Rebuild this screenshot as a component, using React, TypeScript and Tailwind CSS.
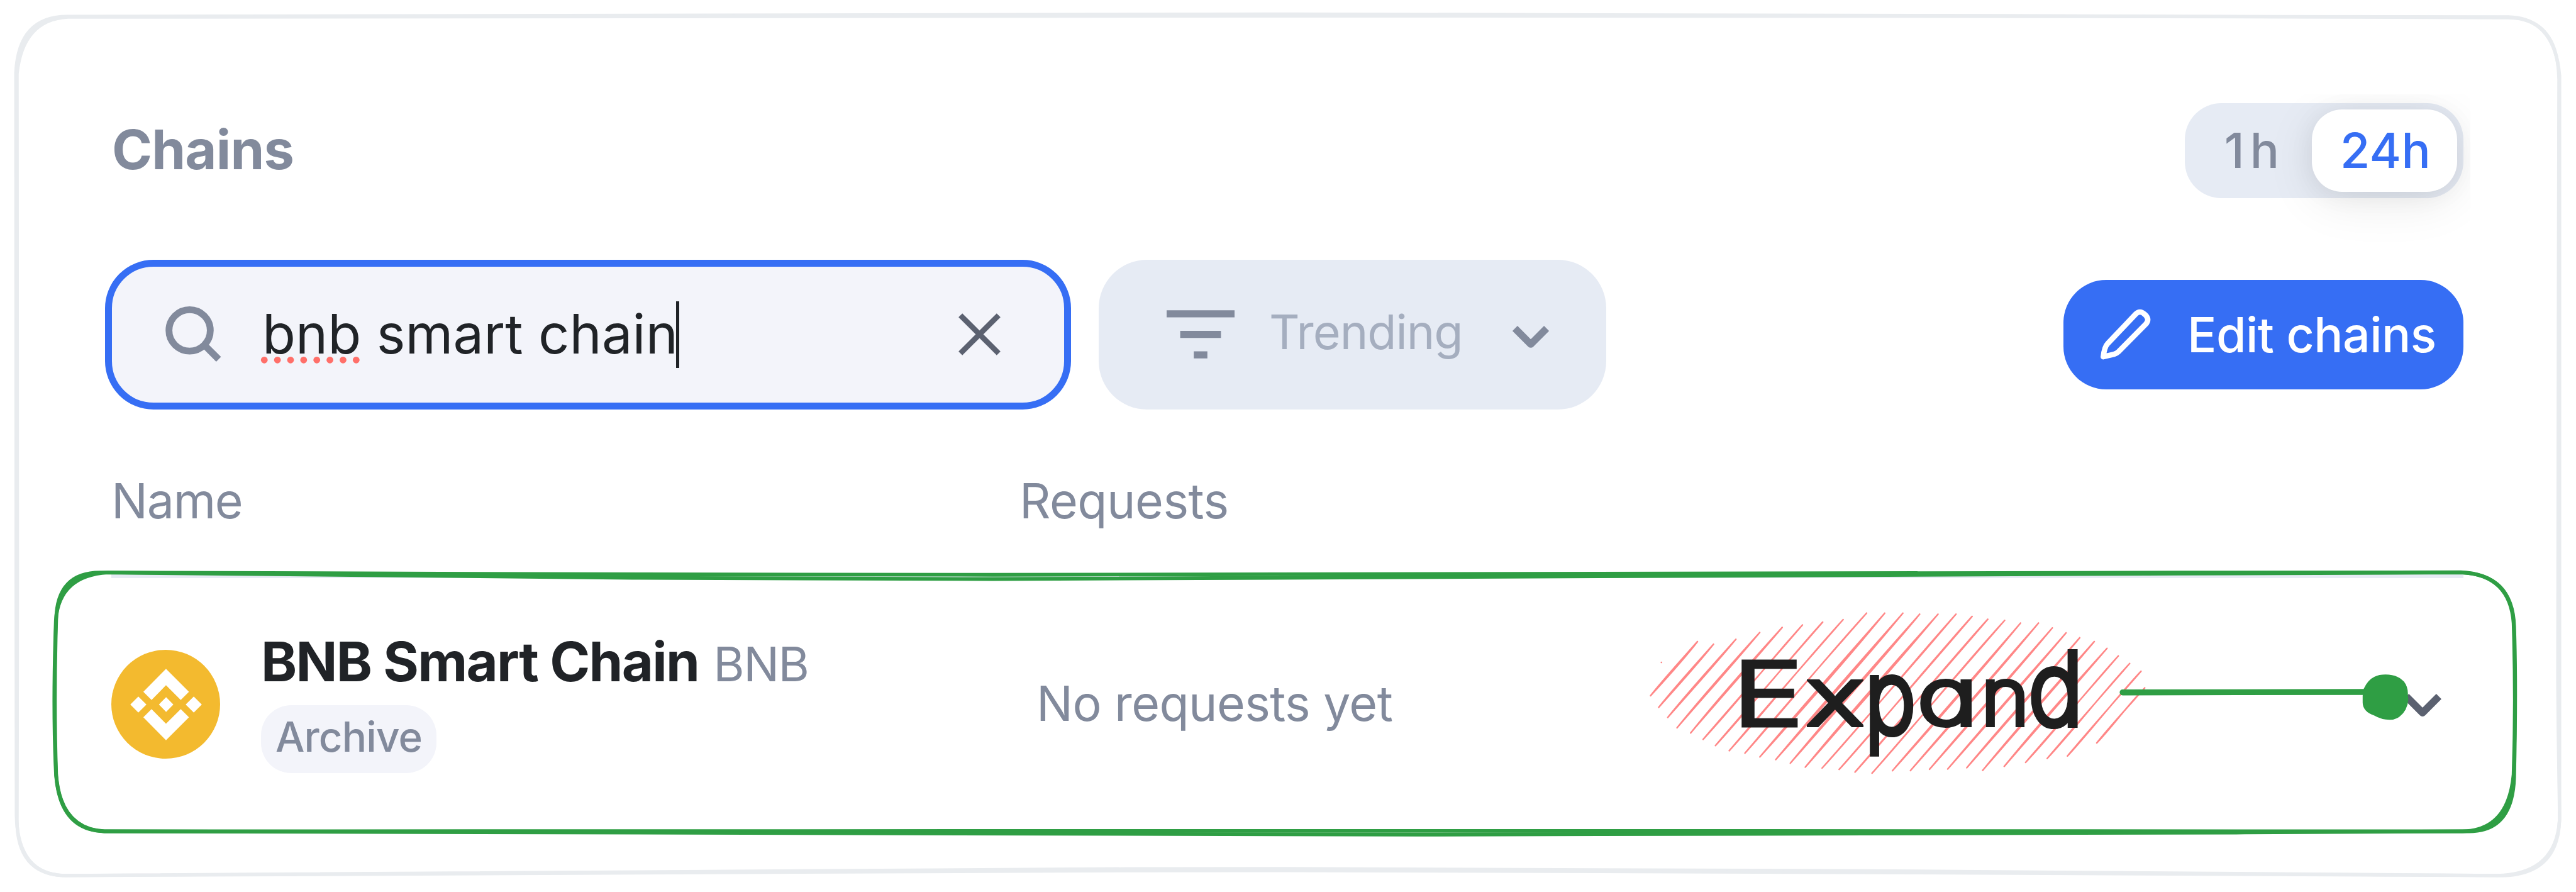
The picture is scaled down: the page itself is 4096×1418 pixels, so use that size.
import type { ReactNode } from "react";

const GREEN = "#2f9e44";

// Hatching strokes: x1, y1 (lower end), x2, y2 (upper end), in thirds of a canvas unit
const HATCH: [number, number, number, number][] = [
  [147, 558, 395, 272], [190, 620, 480, 286], [238, 673, 598, 260], [287, 728, 724, 224],
  [359, 755, 843, 197], [425, 789, 950, 184], [490, 822, 1057, 169], [563, 849, 1165, 156],
  [646, 862, 1289, 122], [725, 882, 1385, 122], [809, 896, 1481, 122], [886, 915, 1570, 127],
  [965, 936, 1667, 127], [1054, 941, 1762, 127], [1144, 948, 1847, 139], [1228, 962, 1930, 154],
  [1318, 968, 2019, 160], [1426, 955, 2103, 174], [1521, 954, 2198, 174], [1622, 947, 2271, 200],
  [1718, 946, 2344, 226], [1819, 939, 2416, 252], [1903, 953, 2493, 272], [2017, 932, 2560, 308],
  [2130, 911, 2620, 348], [2244, 890, 2680, 388], [2351, 877, 2740, 429], [2506, 808, 2760, 517],
];

function hatchPath([x1, y1, x2, y2]: [number, number, number, number], i: number) {
  const wobble = (n: number) => (((i * 37 + n * 23) % 19) - 9) * 0.8;
  const at = (t: number, n: number) =>
    `${x1 + (x2 - x1) * t + wobble(n)} ${y1 + (y2 - y1) * t + wobble(n) * 0.8}`;
  return `M${x1} ${y1}C${at(0.3, 1)} ${at(0.7, 2)} ${x2} ${y2}M${x1} ${y1}C${at(0.3, 3)} ${at(0.7, 4)} ${x2} ${y2}`;
}

function SketchOverlay() {
  return (
    <svg viewBox="0 0 4540 1572" preserveAspectRatio="none" fill="none" className="pointer-events-none absolute inset-0 z-10 h-full w-full">
      <g stroke="#e9ecef" strokeWidth="6" strokeLinecap="round">
        <path d="M120 29C1000 23 1700 24 2270 25C3000 26 3700 28 4421 31Q4508 32 4510 140C4510 500 4506 900 4508 1200C4509 1350 4511 1400 4511 1445Q4505 1542 4400 1543C3800 1538 2900 1531 2270 1531C1500 1531 700 1537 115 1543Q31 1542 29 1437C27 1000 31 500 28 128Q33 28 120 29Z" />
        <path d="M120 30C1000 26 1700 28 2270 28C3000 28 3700 29 4421 30Q4502 32 4511 133C4511 500 4511 900 4511 1445Q4508 1538 4416 1543C3800 1541 2900 1534 2270 1534C1500 1534 700 1540 110 1543Q28 1538 30 1440C32 1000 29 500 30 130Q40 34 120 30Z" />
      </g>
      <g stroke={GREEN} strokeWidth="6.5">
        <path d="M180 1009C800 1011 1200 1013 1750 1013C2700 1013 3500 1009 4337 1008.5Q4424 1012 4430 1098C4433 1190 4433 1280 4430 1365Q4421 1464 4340 1465C3000 1464 1500 1464 184 1465Q106 1461 99 1365C96 1280 96 1190 99 1093Q100 1007 180 1009Z" />
        <path d="M190 1009C800 1016 1200 1020.5 1750 1020.5C2700 1020.5 3500 1011 4337 1009Q4428 1012 4431 1104C4434 1190 4433 1280 4431 1370Q4428 1466 4350 1465C3700 1469 3000 1471 2500 1471C1700 1470 900 1468 184 1465Q100 1463 98 1350C95 1280 95 1190 98.500 1093Q104 1014 190 1009Z" />
      </g>
      <g stroke="#ff8787" strokeWidth="8" strokeLinecap="round" transform="translate(2860 1040) scale(0.33333)">
        <path d="M204 382h1" />
        {HATCH.map((h, i) => (
          <path key={i} d={hatchPath(h, i)} />
        ))}
      </g>
      <path d="M3741 1220.200C3900 1219 4050 1218.500 4180 1219.500" stroke={GREEN} strokeWidth="10.500" strokeLinecap="round" />
      <path
        fill={GREEN}
        d="M4166 1213.700Q4173 1198 4185 1192.500Q4193 1188.800 4204 1188.800Q4225 1188.600 4236.700 1200.800Q4244.500 1211 4243.700 1225L4244.500 1233Q4243 1252 4229 1263Q4222 1268.400 4212 1268.400Q4197 1268.400 4184.500 1261Q4164 1254 4164 1238V1226Z"
      />
    </svg>
  );
}

function SearchIcon() {
  return (
    <svg viewBox="0 0 100 100" fill="none" stroke="#828a9c" strokeWidth="12" className="h-[90px] w-[90px] shrink-0">
      <circle cx="42.800" cy="42.500" r="36.500" />
      <path d="M68 67.500 94 93.500" />
    </svg>
  );
}

function CloseIcon() {
  return (
    <svg viewBox="0 0 74 74" fill="none" stroke="#5b6170" strokeWidth="9.500" className="ml-auto h-[67px] w-[67px] shrink-0">
      <path d="M3.500 3.500 70.500 70.500M70.500 3.500 3.500 70.500" />
    </svg>
  );
}

function FilterIcon() {
  return (
    <svg viewBox="0 0 120 85" fill="#828a9c" className="h-[77px] w-[108px] shrink-0">
      <path d="M0 0h120v12.500H0zM24 36.300h72v12.500H24zM48 72.500h24V85H48z" />
    </svg>
  );
}

function Chevron({ className }: { className: string }) {
  return (
    <svg viewBox="0 0 67 40" fill="none" stroke="currentColor" strokeWidth="13" strokeLinejoin="round" className={className}>
      <path d="M4.500 4.500 33.500 33.500 62.500 4.500" />
    </svg>
  );
}

function PencilIcon() {
  return (
    <svg viewBox="0 0 91 91" fill="none" stroke="white" strokeWidth="9.500" strokeLinejoin="round" className="h-[82px] w-[82px] shrink-0">
      <path d="M7 84.500C8 76 10 66 15 61L64 9.500Q71.500 1.500 80 9.500Q90 18 82 27L34 75.500Q31 78.500 26 80Z" />
    </svg>
  );
}

function BnbLogo() {
  return (
    <svg viewBox="0 0 192 192" className="h-[173px] w-[173px] shrink-0">
      <circle cx="96" cy="96" r="96" fill="#f3ba2f" />
      <path
        fill="white"
        d="M96.500 33.500 137 74 122.500 88.500 96.500 62.500 71 88.500 56.500 74ZM96.500 159.500 137 119 122.500 104.500 96.500 130.500 71 104.500 56.500 119ZM33.500 96.500 47.700 82.300 62 96.500 47.700 110.700ZM131.200 96.500 145.500 82.300 159.700 96.500 145.500 110.700ZM84 96.500 96.700 83.500 109.500 96.500 96.700 109.700Z"
      />
    </svg>
  );
}

function Glyph({ className, children }: { className: string; children: ReactNode }) {
  return (
    <span className="flex justify-center">
      <span className={className}>{children}</span>
    </span>
  );
}

function ExpandNote() {
  return (
    <div
      className="relative z-20 mt-[-25px] ml-[-7px] grid h-[160px] grid-cols-[112px_101px_76px_106px_76px_86px] text-[124px] leading-[160px] font-extralight text-[#1e1e1e] [-webkit-text-stroke:8px_#1e1e1e] [font-feature-settings:'cv11'] [stroke-linejoin:round]"
      aria-label="Expand"
    >
      <Glyph className="origin-[50%_79%] scale-x-[1.5] scale-y-[1.1]">E</Glyph>
      <Glyph className="origin-[50%_79%] scale-x-[1.35]">x</Glyph>
      <Glyph className="origin-[50%_50%] scale-x-[1.1] scale-y-[1.28]">p</Glyph>
      <Glyph className="origin-[50%_79%] scale-x-[1.3]">a</Glyph>
      <Glyph className="origin-[50%_79%] scale-x-[1.05]">n</Glyph>
      <Glyph className="origin-[50%_79%] scale-x-[1.18] scale-y-[1.28]">d</Glyph>
    </div>
  );
}

export default function App() {
  return (
    <div className="relative flex h-[1418px] w-[4096px] flex-col overflow-hidden bg-white pt-[164px] pr-[179px] pl-[167px] font-['Inter',sans-serif] whitespace-nowrap text-[#828a9c]">
      <header className="flex h-[151px] items-center justify-between pl-[11px]">
        <h1 className="mt-[-3px] text-[86.6px] leading-[110px] font-bold tracking-[-0.8px]">Chains</h1>
        <div className="flex h-[151px] w-[443px] items-center justify-end rounded-[58px] bg-[#e6ebf4] pr-[10px] text-[77px] font-medium [clip-path:inset(-14px_-11px_-110px_0)]">
          <button className="mr-[43px] tracking-[9px]">1h</button>
          <button className="h-[131px] w-[231px] rounded-[48px] bg-white pl-[3px] tracking-[0.36px] text-[#366ef4] shadow-[0_14px_80px_rgba(0,0,0,0.09),0_4px_40px_rgba(0,0,0,0.06)]">
            24h
          </button>
        </div>
      </header>

      <div className="mt-[97.500px] flex h-[238px] items-center">
        <div className="flex h-[238px] w-[1536px] items-center rounded-[77px] border-[11px] border-[#366ef4] bg-[#f3f4fa] pr-[101px] pl-[85px]">
          <SearchIcon />
          <div className="relative ml-[64px] flex items-center">
            <span className="mt-[-2px] text-[86.6px] leading-[110px] tracking-[0.07px] text-[#202327]">bnb smart chain</span>
            <span className="ml-[-3px] h-[106px] w-[5px] bg-[#202327]" />
            <svg viewBox="0 0 180 14" fill="#ff6f69" className="absolute top-[88px] left-[-4px] h-[12.6px] w-[162px]">
              {[0, 1, 2, 3, 4, 5, 6, 7].map((i) => (
                <circle key={i} cx={8 + i * 23.2} cy="7" r="6" />
              ))}
            </svg>
          </div>
          <CloseIcon />
        </div>
        <button className="ml-[44px] flex h-[238px] w-[807px] items-center rounded-[77px] bg-[#e6ebf4] pl-[108px]">
          <FilterIcon />
          <span className="mt-[-7px] ml-[55px] w-[307px] text-left text-[75.5px] leading-[100px] tracking-[-1px] text-[#a5aebf]">Trending</span>
          <Chevron className="mt-[8px] ml-[80px] h-[35px] w-[58px]" />
        </button>
        <button className="ml-auto flex h-[174px] w-[636px] items-center rounded-[68px] bg-[#366ef4] pl-[57px] text-white">
          <PencilIcon />
          <span className="ml-[58px] text-[77px] leading-[100px] font-medium tracking-[-0.55px]">Edit chains</span>
        </button>
      </div>

      <div className="flex h-[262.500px] items-center pt-[29px] pl-[10px] text-[77px] leading-[100px]">
        <span className="w-[1444px] tracking-[-1.3px]">Name</span>
        <span className="tracking-[-0.5px]">Requests</span>
      </div>

      <div className="ml-[10px] grid h-[406px] grid-cols-[1471px_1114px_1fr_auto] items-center border-t-[6px] border-[#e6ebf4]">
        <div className="flex items-center">
          <BnbLogo />
          <div className="mt-[-13px] ml-[65px]">
            <div className="relative top-[2px] flex items-baseline leading-[108px]">
              <span className="text-[86.6px] font-bold tracking-[-1.71px] text-[#202327]">BNB Smart Chain</span>
              <span className="ml-[23px] text-[75.5px] tracking-[-1.5px]">BNB</span>
            </div>
            <div className="mt-[13px] flex h-[108px] w-[279px] items-center rounded-[48px] bg-[#f3f4fa] pb-[5px] pl-[23px] text-[65.5px] font-medium tracking-[-0.85px]">
              Archive
            </div>
          </div>
        </div>
        <span className="mt-[-3px] text-[77px] leading-[100px] tracking-[-0.6px]">No requests yet</span>
        <ExpandNote />
        <Chevron className="mt-[3px] mr-[35px] h-[36px] w-[60px] text-[#5b6170]" />
      </div>

      <SketchOverlay />
    </div>
  );
}
